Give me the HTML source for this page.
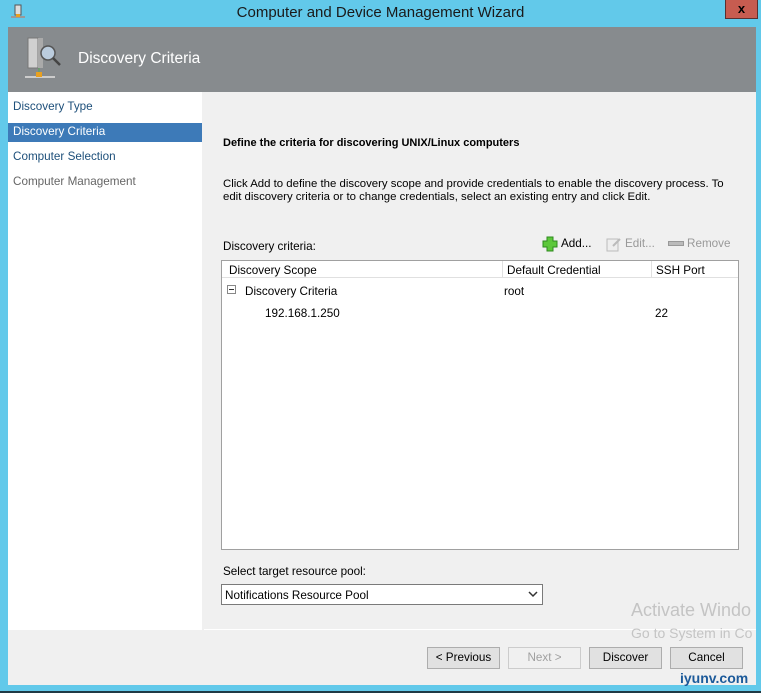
<!DOCTYPE html>
<html><head><style>
*{margin:0;padding:0;box-sizing:border-box}
body{width:761px;height:693px;background:#62c9ea;position:relative;overflow:hidden;font-family:"Liberation Sans",sans-serif;font-size:11.7px;color:#000}
.abs{position:absolute}
.t{white-space:nowrap}
</style></head><body>
<div class="abs t" style="left:0;top:4px;width:761px;text-align:center;font-size:15px;color:#1a1a1a">Computer and Device Management Wizard</div>
<svg class="abs" style="left:11px;top:4px" width="14" height="16"><rect x="4" y="1" width="6" height="10" fill="#ddd" stroke="#555"/><rect x="0" y="12" width="14" height="2" fill="#999"/><rect x="5" y="10" width="4" height="3" fill="#e8a020"/></svg>
<div class="abs" style="left:725px;top:0;width:33px;height:19px;background:#c75c50;border:1px solid #5a3030;border-top:none;color:#000;font-weight:bold;font-size:13px;text-align:center;line-height:18px">x</div>
<div class="abs" style="left:8px;top:27px;width:748px;height:65px;background:#878b8e"></div>
<svg class="abs" style="left:24px;top:36px" width="40" height="46"><rect x="4" y="2" width="10" height="30" fill="#d0d0d0" stroke="#777"/><rect x="14" y="2" width="5" height="30" fill="#aaa"/><circle cx="24" cy="17" r="7" fill="#bcd" stroke="#555" stroke-width="1.5"/><line x1="29" y1="22" x2="36" y2="29" stroke="#444" stroke-width="2.5"/><rect x="1" y="40" width="30" height="2" fill="#ccc"/><rect x="12" y="36" width="6" height="5" fill="#e8a020"/><line x1="15" y1="32" x2="15" y2="36" stroke="#5a5"/></svg>
<div class="abs t" style="left:78px;top:50px;font-size:15.5px;color:#fff">Discovery Criteria</div>
<div class="abs" style="left:8px;top:92px;width:194px;height:538px;background:#fff"></div>
<div class="abs" style="left:202px;top:92px;width:554px;height:538px;background:#f0f0f0"></div>
<div class="abs" style="left:8px;top:630px;width:748px;height:55px;background:#f0f0f0"></div>
<div class="abs" style="left:204px;top:629px;width:552px;height:1px;background:#fff"></div>
<div class="abs" style="left:0;top:691px;width:761px;height:2px;background:#1f3a45"></div>
<div class="abs t" style="left:13px;top:100px;color:#1d4f7a">Discovery Type</div>
<div class="abs" style="left:8px;top:123px;width:194px;height:19px;background:#3d7ab8"></div>
<div class="abs t" style="left:13px;top:125px;color:#fff">Discovery Criteria</div>
<div class="abs t" style="left:13px;top:150px;color:#1d4f7a">Computer Selection</div>
<div class="abs t" style="left:13px;top:175px;color:#666">Computer Management</div>
<div class="abs t" style="left:223px;top:137px;font-weight:bold;font-size:11px">Define the criteria for discovering UNIX/Linux computers</div>
<div class="abs" style="left:223px;top:178px;width:505px;font-size:11.4px;line-height:13px">Click Add to define the discovery scope and provide credentials to enable the discovery process. To edit discovery criteria or to change credentials, select an existing entry and click Edit.</div>
<div class="abs t" style="left:223px;top:240px">Discovery criteria:</div>
<svg class="abs" style="left:542px;top:236px" width="16" height="16"><path d="M5 1h6v4h4v6h-4v4H5v-4H1V5h4z" fill="#5cc83a" stroke="#2e8a1e"/></svg>
<div class="abs t" style="left:561px;top:237px;color:#000">Add...</div>
<svg class="abs" style="left:606px;top:236px" width="16" height="16"><rect x="1" y="3" width="11" height="12" fill="#eee" stroke="#bbb"/><path d="M7 10l7-7" stroke="#bbb" stroke-width="2"/></svg>
<div class="abs t" style="left:625px;top:237px;color:#999">Edit...</div>
<div class="abs" style="left:668px;top:241px;width:16px;height:5px;background:#bbb;border:1px solid #999"></div>
<div class="abs t" style="left:687px;top:237px;color:#999">Remove</div>
<div class="abs" style="left:221px;top:260px;width:518px;height:290px;background:#fff;border:1px solid #a0a0a0"></div>
<div class="abs" style="left:222px;top:261px;width:516px;height:17px;border-bottom:1px solid #e0e0e0"></div>
<div class="abs" style="left:502px;top:261px;width:1px;height:17px;background:#e0e0e0"></div>
<div class="abs" style="left:651px;top:261px;width:1px;height:17px;background:#e0e0e0"></div>
<div class="abs t" style="left:229px;top:264px">Discovery Scope</div>
<div class="abs t" style="left:507px;top:264px">Default Credential</div>
<div class="abs t" style="left:656px;top:264px">SSH Port</div>
<div class="abs" style="left:227px;top:285px;width:9px;height:9px;border:1px solid #888;background:#fff"><div style="position:absolute;left:1px;top:3px;width:5px;height:1px;background:#333"></div></div>
<div class="abs t" style="left:245px;top:285px">Discovery Criteria</div>
<div class="abs t" style="left:504px;top:285px">root</div>
<div class="abs t" style="left:265px;top:307px">192.168.1.250</div>
<div class="abs t" style="left:655px;top:307px">22</div>
<div class="abs t" style="left:223px;top:565px">Select target resource pool:</div>
<div class="abs" style="left:221px;top:584px;width:322px;height:21px;background:#fff;border:1px solid #7a7a7a"></div>
<div class="abs t" style="left:225px;top:589px">Notifications Resource Pool</div>
<svg class="abs" style="left:528px;top:590px" width="10" height="8"><path d="M1 2l4 4 4-4" stroke="#333" fill="none" stroke-width="1.5"/></svg>
<div class="abs t" style="left:631px;top:600px;font-size:18px;color:#c4c4c4">Activate Windo</div>
<div class="abs t" style="left:631px;top:625px;font-size:14px;color:#c4c4c4">Go to System in Co</div>
<div class="abs" style="left:427px;top:647px;width:73px;height:22px;background:#e1e1e1;border:1px solid #adadad;text-align:center;line-height:20px">&lt; Previous</div>
<div class="abs" style="left:508px;top:647px;width:73px;height:22px;background:#f0f0f0;border:1px solid #ccc;text-align:center;line-height:20px;color:#a0a0a0">Next &gt;</div>
<div class="abs" style="left:589px;top:647px;width:73px;height:22px;background:#e1e1e1;border:1px solid #adadad;text-align:center;line-height:20px">Discover</div>
<div class="abs" style="left:670px;top:647px;width:73px;height:22px;background:#e1e1e1;border:1px solid #adadad;text-align:center;line-height:20px">Cancel</div>
<div class="abs t" style="left:680px;top:670px;font-size:14px;font-weight:bold;color:#1c5a9a">iyunv.com</div>
</body></html>
